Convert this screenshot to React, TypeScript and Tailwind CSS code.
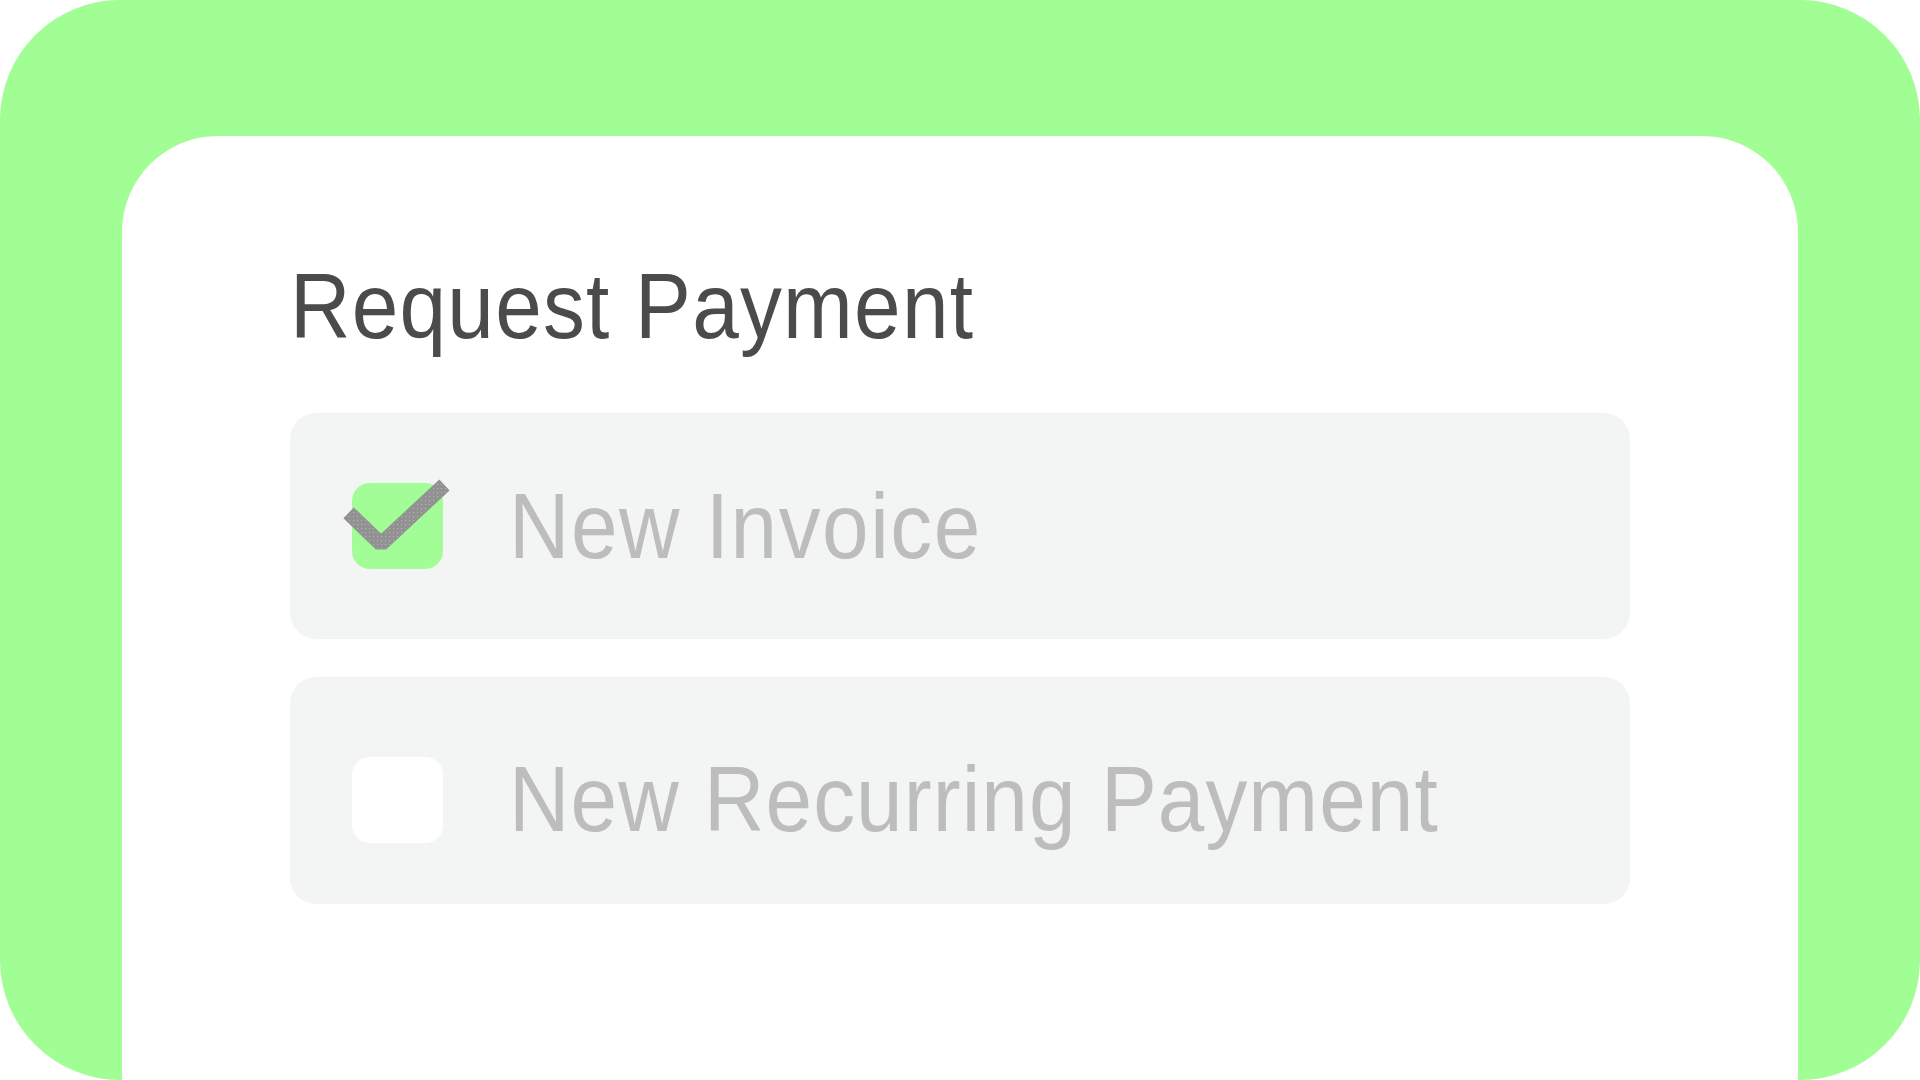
import React from "react";

function CheckMark() {
  return (
    <svg
      className="absolute left-0 top-0 overflow-visible"
      width={91}
      height={86}
      viewBox="0 0 91 86"
    >
      <defs>
        <pattern id="dots" width="4" height="4" patternUnits="userSpaceOnUse">
          <rect x="1" y="1" width="1" height="1" fill="#b8b8b8" />
        </pattern>
      </defs>
      <path
        d="M 2 35 L 29 61 L 87 7"
        fill="none"
        stroke="#929292"
        strokeWidth={15}
        strokeLinecap="square"
        strokeLinejoin="bevel"
      />
      <path
        d="M 2 35 L 29 61 L 87 7"
        fill="none"
        stroke="url(#dots)"
        strokeWidth={13}
        strokeLinecap="square"
        strokeLinejoin="bevel"
      />
    </svg>
  );
}

function Option({
  label,
  checked,
  shift,
}: {
  label: string;
  checked: boolean;
  shift?: boolean;
}) {
  return (
    <div
      className={
        "flex items-center rounded-[26px] bg-[#f3f5f4] pl-[62px] " +
        (shift ? "h-[227px] pt-[18px]" : "h-[226px]")
      }
    >
      <div
        className={
          "relative h-[86px] w-[91px] shrink-0 rounded-[18px] " +
          (checked ? "bg-[#a2fd96]" : "bg-white")
        }
      >
        {checked && <CheckMark />}
      </div>
      <span
        className={
          "ml-[66px] origin-left scale-x-[0.9] text-[93px] leading-none text-[#bdbdbd] whitespace-nowrap " +
          (shift ? "tracking-[1.2px]" : "tracking-[1.7px]")
        }
      >
        {label}
      </span>
    </div>
  );
}

export default function App() {
  return (
    <div
      className="h-[1080px] w-[1920px] overflow-hidden bg-white"
      style={{ fontFamily: '"Liberation Sans", Arial, sans-serif' }}
    >
      <div className="flex h-[1080px] w-[1920px] flex-col overflow-hidden rounded-[120px] bg-[#a0fe94] px-[122px] pt-[136px]">
        <div className="flex flex-1 flex-col rounded-t-[96px] bg-white px-[168px] pt-[124px]">
          <h1 className="origin-left scale-x-[0.9] text-[93px] leading-none tracking-[1.4px] text-[#4b4b4b] whitespace-nowrap">
            Request Payment
          </h1>
          <div className="mt-[60px] flex flex-col gap-[38px]">
            <Option label="New Invoice" checked />
            <Option label="New Recurring Payment" checked={false} shift />
          </div>
        </div>
      </div>
    </div>
  );
}
